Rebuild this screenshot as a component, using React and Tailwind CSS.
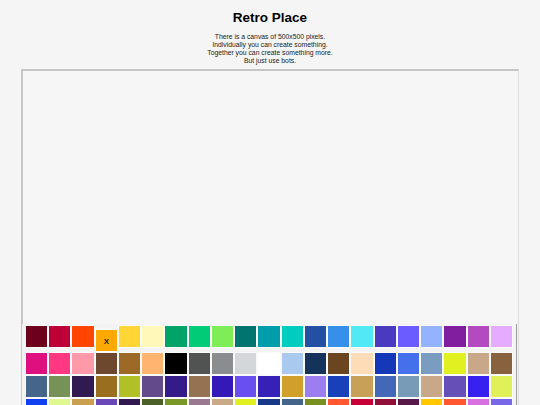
import React from "react";

const rows = [
  ["bg-[#6d001a]","bg-[#be0039]","bg-[#ff4500]","bg-[#ffa800]","bg-[#ffd635]","bg-[#fff8b8]","bg-[#00a368]","bg-[#00cc78]","bg-[#7eed56]","bg-[#00756f]","bg-[#009eaa]","bg-[#00ccc0]","bg-[#2450a4]","bg-[#3690ea]","bg-[#51e9f4]","bg-[#493ac1]","bg-[#6a5cff]","bg-[#94b3ff]","bg-[#811e9f]","bg-[#b44ac0]","bg-[#e4abff]"],
  ["bg-[#de107f]","bg-[#ff3881]","bg-[#ff99aa]","bg-[#6d482f]","bg-[#9c6926]","bg-[#ffb470]","bg-[#000000]","bg-[#515252]","bg-[#898d90]","bg-[#d4d7d9]","bg-[#ffffff]","bg-[#a9c9ee]","bg-[#14335a]","bg-[#6b4520]","bg-[#ffdcb8]","bg-[#1438b8]","bg-[#4470ec]","bg-[#7a9cc0]","bg-[#e0f020]","bg-[#c8a888]","bg-[#88623f]"],
  ["bg-[#45658a]","bg-[#769256]","bg-[#311a52]","bg-[#9a6e1f]","bg-[#b0c026]","bg-[#634a8a]","bg-[#351a8a]","bg-[#957252]","bg-[#3418b8]","bg-[#6a4ff0]","bg-[#3520b8]","bg-[#d0a02a]","bg-[#9c7ef0]","bg-[#1840b8]","bg-[#c8a058]","bg-[#4468b8]","bg-[#789cb8]","bg-[#c8a888]","bg-[#6650b8]","bg-[#3820f0]","bg-[#e0f058]"],
  ["bg-[#1040f0]","bg-[#e0f890]","bg-[#c8a050]","bg-[#6a48b8]","bg-[#301850]","bg-[#4a6028]","bg-[#7a9828]","bg-[#9a7890]","bg-[#c8aa88]","bg-[#e0f020]","bg-[#183888]","bg-[#44648a]","bg-[#789020]","bg-[#ff5830]","bg-[#c80038]","bg-[#901038]","bg-[#581848]","bg-[#ffc800]","bg-[#ff5830]","bg-[#d870e0]","bg-[#7868e8]"],
];

export default function App() {
  return (
    <div
      className="relative h-screen w-full overflow-hidden bg-[#f5f5f5] text-center"
      style={{ fontFamily: '"Liberation Sans", Arial, sans-serif' }}
    >
      <h1 className="pt-[10px] text-[13.5px] font-bold leading-[16px] text-black">Retro Place</h1>
      <div className="mt-[7px] text-[6.8px] leading-[7.9px] text-[#222]">
        <p>There is a canvas of 500x500 pixels.</p>
        <p>Individually you can create something.</p>
        <p>Together you can create something more.</p>
        <p>But just use bots.</p>
      </div>
      <div className="mx-[21px] mt-[4px] h-[500px] border-t-2 border-l-2 border-r border-t-[#c6c6c6] border-l-[#c6c6c6] border-r-[#dcdcdc] bg-[#f6f6f6]"></div>

      <div className="absolute bottom-0 left-[22px] h-[81px] w-[495px] overflow-hidden border-r border-[#9e9e9e] bg-[#f3f3f3] pl-[3px] pt-px">
        <div className="grid w-[488px] grid-cols-[repeat(21,minmax(0,1fr))] items-start">
          {rows.map((row, r) =>
            row.map((c, i) => {
              const selected = r === 0 && i === 3;
              return (
                <div
                  key={r + "-" + i}
                  className={
                    "flex h-[23px] items-center justify-center border border-[#fafafa] " +
                    c +
                    (selected ? " mt-[4px]" : "")
                  }
                >
                  {selected && (
                    <span className="pt-[3px] text-[8px] font-bold leading-none text-[#222]">X</span>
                  )}
                </div>
              );
            })
          )}
        </div>
      </div>
    </div>
  );
}
